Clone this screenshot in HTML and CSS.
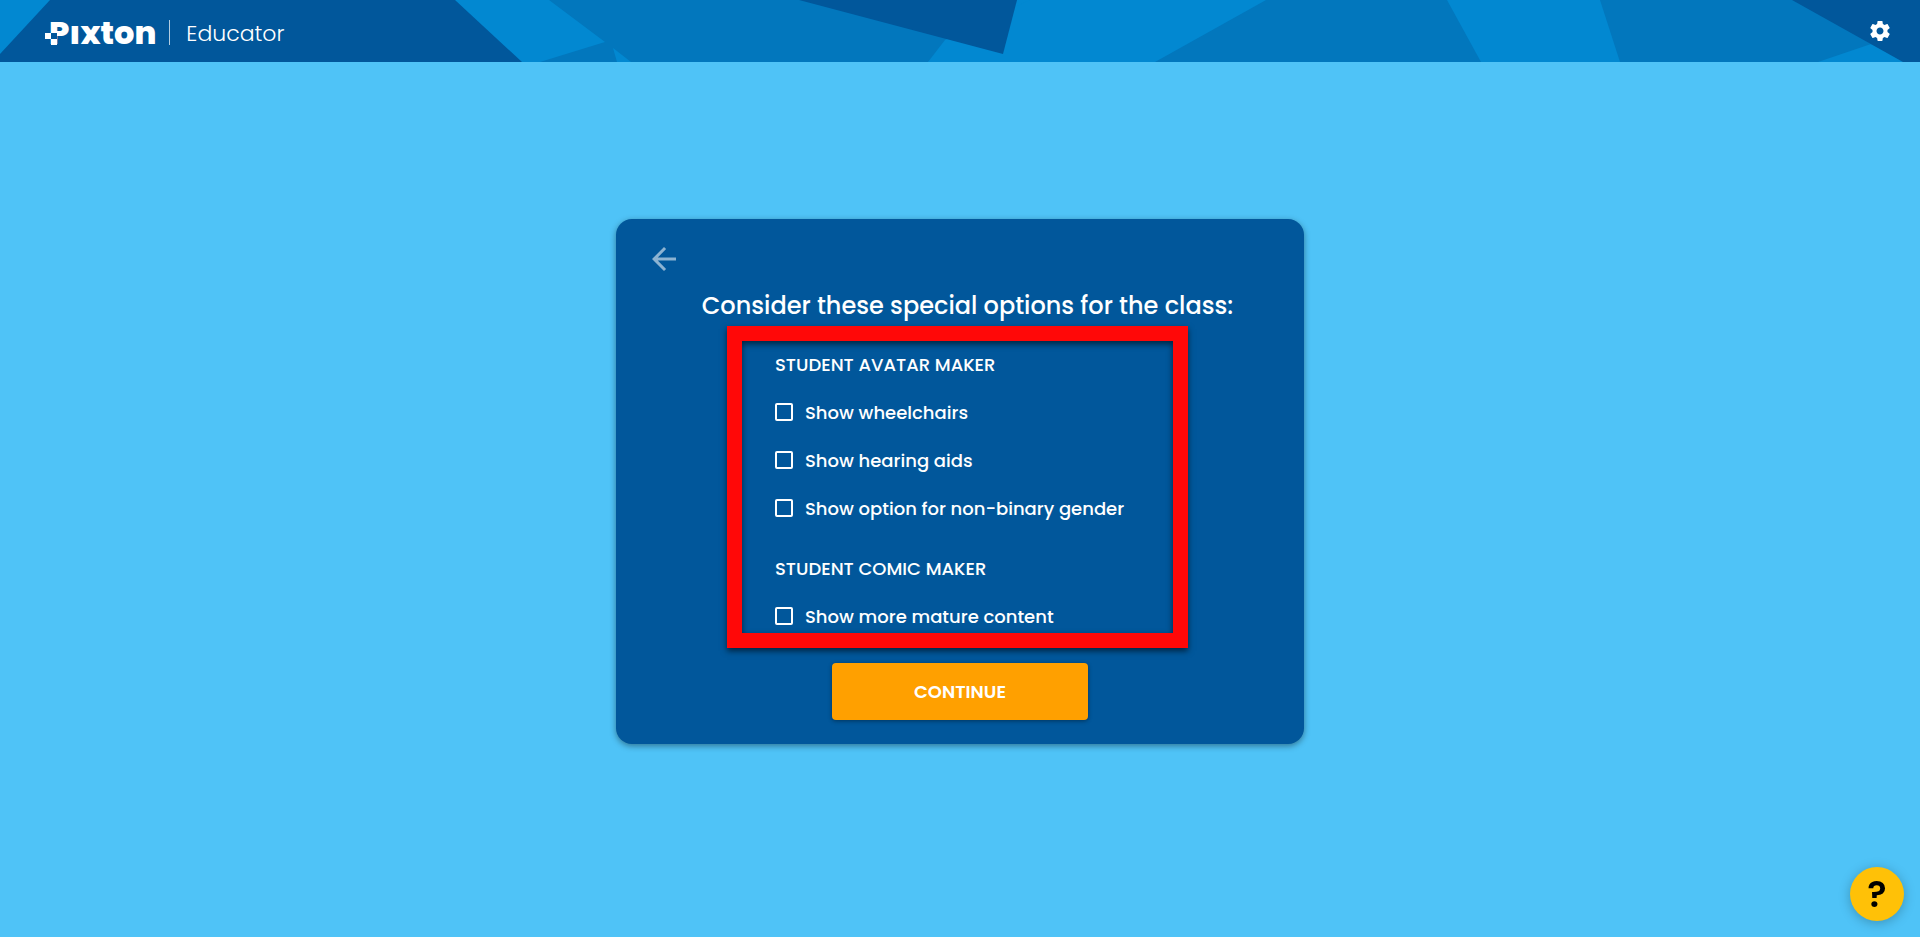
FILE: index.html
```html
<!DOCTYPE html>
<html lang="en">
<head>
    <meta charset="UTF-8">
    <meta name="viewport" content="width=device-width, initial-scale=1.0">
    <title>Pixton Educator</title>
    <link rel="stylesheet" href="styles.css">
</head>
<body>
    <header class="topbar">
        <svg class="topbar-bg" viewBox="0 0 1920 62" preserveAspectRatio="none" aria-hidden="true">
            <polygon fill="#0277bd" points="549,0 1017,0 928,62 540,62 605,42"/>
            <polygon fill="#0288d1" points="613,48 631,62 617,62"/>
            <polygon fill="#0288d1" points="945,40 1030,0 1030,62 928,62"/>
            <polygon fill="#0277bd" points="1266,0 1447,0 1481,62 1155,62"/>
            <polygon fill="#0277bd" points="1600,0 1800,0 1900,62 1620,62"/>
            <polygon fill="#0288d1" points="1871,44 1910,62 1818,62"/>
            <polygon fill="#01579b" points="50,0 455,0 522,62 0,62 0,54"/>
            <polygon fill="#01579b" points="799,0 1017,0 1003,54"/>
            <polygon fill="#01579b" points="1792,0 1920,0 1920,62 1903,62"/>
        </svg>
        <a class="brand" href="#">
            <span class="logo">Pıxton
                <svg class="logo-mark" viewBox="0 0 12 12" aria-hidden="true">
                    <path fill="#fff" d="M0 0h6v6H0zM6 6h6v6H6z"/>
                    <path fill="#01579b" d="M6 0h6v6H6z"/>
                </svg>
            </span>
            <span class="product">Educator</span>
        </a>
        <button class="icon-button settings" type="button" aria-label="Settings">
            <svg viewBox="0 0 24 24" width="24" height="24" fill="currentColor">
                <path d="M19.43 12.98c.04-.32.07-.64.07-.98s-.03-.66-.07-.98l2.11-1.65c.19-.15.24-.42.12-.64l-2-3.46c-.12-.22-.39-.3-.61-.22l-2.49 1c-.52-.4-1.08-.73-1.69-.98l-.38-2.65C14.46 2.18 14.25 2 14 2h-4c-.25 0-.46.18-.49.42l-.38 2.65c-.61.25-1.17.59-1.69.98l-2.49-1c-.23-.09-.49 0-.61.22l-2 3.46c-.13.22-.07.49.12.64l2.11 1.65c-.04.32-.07.65-.07.98s.03.66.07.98l-2.11 1.65c-.19.15-.24.42-.12.64l2 3.46c.12.22.39.3.61.22l2.49-1c.52.4 1.08.73 1.69.98l.38 2.65c.03.24.24.42.49.42h4c.25 0 .46-.18.49-.42l.38-2.65c.61-.25 1.17-.59 1.69-.98l2.49 1c.23.09.49 0 .61-.22l2-3.46c.12-.22.07-.49-.12-.64l-2.11-1.65zM12 15.5c-1.93 0-3.5-1.57-3.5-3.5s1.57-3.5 3.5-3.5 3.5 1.57 3.5 3.5-1.57 3.5-3.5 3.5z"/>
            </svg>
        </button>
    </header>

    <main>
        <form class="card">
            <button class="icon-button back" type="button" aria-label="Back">
                <svg viewBox="0 0 24 24" width="36" height="36" fill="currentColor">
                    <path d="M20 11H7.83l5.59-5.59L12 4l-8 8 8 8 1.41-1.41L7.83 13H20v-2z"/>
                </svg>
            </button>
            <h1>Consider these special options for the class:</h1>

            <div class="options">
                <h2>STUDENT AVATAR MAKER</h2>
                <label><input type="checkbox" name="wheelchairs">Show wheelchairs</label>
                <label><input type="checkbox" name="hearing-aids">Show hearing aids</label>
                <label><input type="checkbox" name="non-binary">Show option for non-binary gender</label>
                <h2 class="next-group">STUDENT COMIC MAKER</h2>
                <label><input type="checkbox" name="mature">Show more mature content</label>
            </div>

            <button class="continue" type="submit">CONTINUE</button>
        </form>
    </main>

    <button class="help" type="button" aria-label="Help">?</button>
</body>
</html>
```

FILE: styles.css
```css
* {
    box-sizing: border-box;
}

body {
    margin: 0;
    min-height: 100vh;
    display: flex;
    flex-direction: column;
    background-color: #4fc3f7;
    color: #fff;
    font-family: Poppins, Inter, sans-serif;
}

button {
    border: none;
    padding: 0;
    color: inherit;
    font-family: inherit;
    cursor: pointer;
}

.topbar {
    position: relative;
    height: 62px;
    padding: 0 28px 0 49px;
    display: flex;
    align-items: center;
    justify-content: space-between;
    background-color: #0288d1;
}

.topbar-bg {
    position: absolute;
    inset: 0;
    width: 100%;
    height: 100%;
}

.brand {
    position: relative;
    display: flex;
    align-items: center;
    padding-top: 3px;
    color: #fff;
    text-decoration: none;
}

.logo {
    position: relative;
    font-size: 32px;
    line-height: 32px;
    font-weight: 800;
}

/* checker squares over the foot of the P */
.logo-mark {
    position: absolute;
    left: -4px;
    bottom: 4px;
    width: 12px;
    height: 12px;
}

.product {
    margin-left: 13px;
    padding: 3px 0 0 16px;
    border-left: 1px solid #b3cde1;
    font-size: 22px;
    line-height: 22px;
    font-weight: 300;
}

.icon-button {
    position: relative;
    display: flex;
    background: none;
}

main {
    flex: 1;
    display: flex;
    justify-content: center;
    align-items: center;
    padding-bottom: 36px;
}

.card {
    width: 688px;
    padding: 22px 30px 24px;
    display: flex;
    flex-direction: column;
    align-items: center;
    background-color: #01579b;
    border-radius: 16px;
    box-shadow: 0 2px 6px rgba(0, 0, 0, 0.4);
}

.back {
    align-self: flex-start;
    opacity: 0.55;
}

h1 {
    margin: 11px 0 2px;
    padding-left: 15px;
    font-size: 24px;
    line-height: 36px;
    font-weight: 500;
}

.options {
    width: 461px;
    margin-right: 5px;
    padding: 12px 33px 4px;
    display: flex;
    flex-direction: column;
    gap: 24px;
    border: 15px solid #ff0808;
    box-shadow: 0 3px 6px rgba(0, 0, 0, 0.6), inset 0 3px 6px rgba(0, 0, 0, 0.6);
}

h2 {
    margin: 0;
    font-size: 18px;
    line-height: 24px;
    font-weight: 500;
}

.next-group {
    margin-top: 12px;
}

label {
    display: flex;
    align-items: center;
    gap: 12px;
    font-size: 18px;
    line-height: 24px;
    font-weight: 500;
}

input[type="checkbox"] {
    appearance: none;
    width: 18px;
    height: 18px;
    margin: 0 0 2px;
    border: 2px solid #fff;
    border-radius: 2px;
}

input[type="checkbox"]:checked {
    background-color: #ffa000;
}

.continue {
    width: 256px;
    height: 57px;
    margin-top: 15px;
    background-color: #ffa000;
    border-radius: 4px;
    box-shadow: 0 1px 4px rgba(0, 0, 0, 0.4);
    font-size: 18px;
    font-weight: 600;
}

.help {
    position: fixed;
    right: 16px;
    bottom: 16px;
    width: 54px;
    height: 54px;
    background-color: #ffc107;
    border-radius: 50%;
    box-shadow: 0 2px 12px rgba(0, 0, 0, 0.25);
    color: #000;
    font-size: 36px;
    font-weight: 600;
}
```
